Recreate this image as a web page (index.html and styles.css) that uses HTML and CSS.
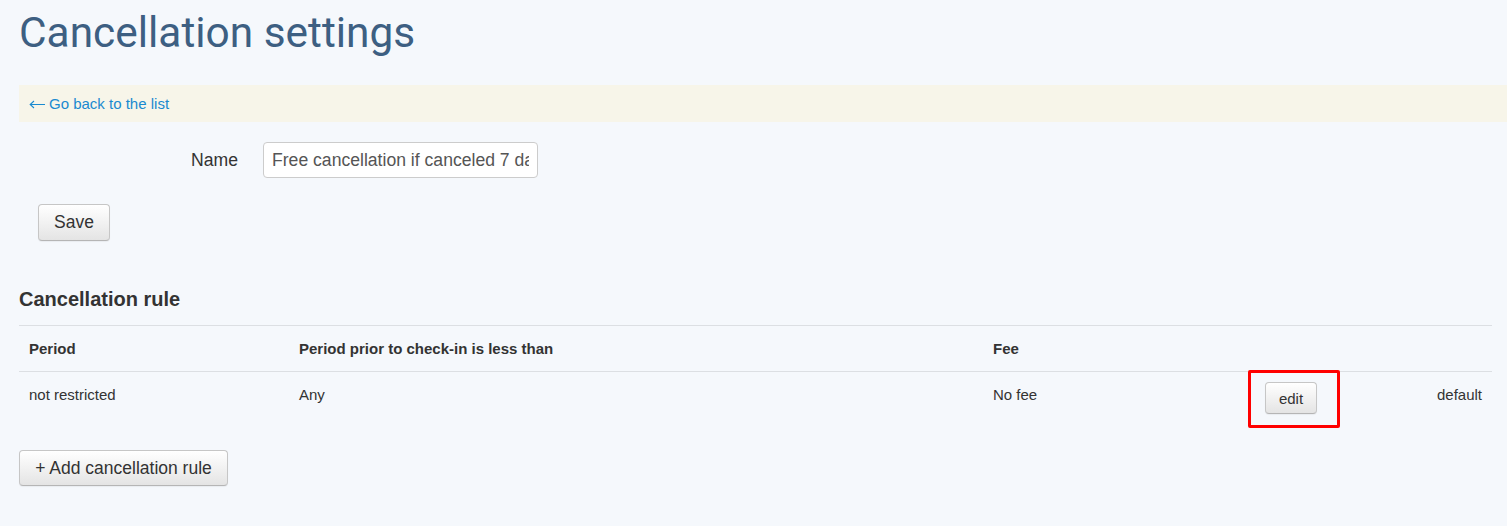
FILE: index.html
```html
<!DOCTYPE html>
<html lang="en">
<head>
<meta charset="utf-8">
<title>Cancellation settings</title>
<link rel="stylesheet" href="styles.css">
</head>
<body>
<main class="page">
  <h1 class="page-title">Cancellation settings</h1>
  <div class="back-bar"><a class="back-link" href="#"><svg class="back-arrow" width="16" height="9" viewBox="0 0 16 9" aria-hidden="true"><path d="M16 4.5H1.5M5 1L1.2 4.5L5 8" fill="none" stroke="currentColor" stroke-width="1.1"/></svg>Go back to the list</a></div>

  <form class="settings-form">
    <div class="form-row">
      <label class="form-label" for="name">Name</label>
      <input class="form-input" id="name" type="text" value="Free cancellation if canceled 7 days before check-in">
    </div>
    <div class="form-actions">
      <button class="btn btn-save" type="button">Save</button>
    </div>
  </form>

  <h2 class="section-title">Cancellation rule</h2>
  <table class="rules">
    <colgroup>
      <col class="c1"><col class="c2"><col class="c3"><col class="c4"><col class="c5">
    </colgroup>
    <thead>
      <tr><th>Period</th><th>Period prior to check-in is less than</th><th>Fee</th><th></th><th></th></tr>
    </thead>
    <tbody>
      <tr>
        <td>not restricted</td>
        <td>Any</td>
        <td>No fee</td>
        <td class="cell-action"><span class="highlight"><button class="btn btn-sm" type="button">edit</button></span></td>
        <td class="cell-default">default</td>
      </tr>
    </tbody>
  </table>

  <button class="btn btn-add" type="button">+ Add cancellation rule</button>
</main>
</body>
</html>
```

FILE: styles.css
```css
html, body {
  margin: 0;
  padding: 0;
  background: #f5f8fc;
}
body {
  font-family: "Liberation Sans", Arial, sans-serif;
  color: #333;
}
.page {
  padding: 0 0 40px 19px;
}
.page-title {
  font-family: Roboto, "Liberation Sans", sans-serif;
  font-weight: 400;
  font-size: 42.4px;
  line-height: 46px;
  color: #3d5f82;
  margin: 0;
  padding-top: 10px;
}
.back-bar {
  margin-top: 29px;
  background: #f7f5e9;
  height: 37px;
  display: flex;
  align-items: center;
  padding-left: 10px;
}
.back-link {
  color: #1a8ad0;
  text-decoration: none;
  font-size: 15px;
  display: inline-flex;
  align-items: center;
}
.back-arrow {
  margin-right: 4px;
  margin-top: 1px;
}
.settings-form {
  margin-top: 20px;
}
.form-row {
  display: flex;
  align-items: center;
  gap: 25px;
}
.form-label {
  width: 219px;
  text-align: right;
  font-size: 17.6px;
  color: #333;
}
.form-input {
  box-sizing: border-box;
  width: 275px;
  height: 36px;
  border: 1px solid #ccc;
  border-radius: 4px;
  background: #fff;
  padding: 0 8px;
  font-family: "Liberation Sans", Arial, sans-serif;
  font-size: 17.6px;
  color: #555;
}
.form-actions {
  margin-top: 26px;
  padding-left: 19px;
}
.btn {
  font-family: "Liberation Sans", Arial, sans-serif;
  color: #333;
  background: linear-gradient(#ffffff, #e4e4e4);
  border: 1px solid #c6c6c6;
  border-bottom-color: #b5b5b5;
  border-radius: 4px;
  box-shadow: 0 1px 1px rgba(0,0,0,0.05);
  cursor: pointer;
  box-sizing: border-box;
}
.btn-save {
  width: 72px;
  height: 37px;
  font-size: 17.5px;
}
.section-title {
  font-size: 20px;
  font-weight: 700;
  margin: 46px 0 0;
  line-height: 24px;
}
.rules {
  margin-top: 14px;
  width: calc(100% - 15px);
  border-collapse: collapse;
  table-layout: fixed;
  font-size: 15px;
}
.rules .c1 { width: 270px; }
.rules .c2 { width: 694px; }
.rules .c3 { width: 272px; }
.rules .c4 { width: 140px; }
.rules th, .rules td {
  text-align: left;
  padding: 12px 10px;
  line-height: 21px;
  vertical-align: top;
}
.rules thead tr { border-top: 1px solid #dcdfe3; border-bottom: 1px solid #dcdfe3; }
.rules th { font-weight: 700; }
.rules td.cell-action { padding-top: 10px; padding-bottom: 10px; }
.rules td.cell-default { text-align: right; }
.highlight {
  position: relative;
  display: inline-block;
}
.highlight::after {
  content: "";
  position: absolute;
  left: -17px;
  top: -12px;
  right: -23px;
  bottom: -14px;
  border: 3px solid #ff0000;
  border-radius: 2px;
}
.btn-sm {
  width: 52px;
  height: 32px;
  font-size: 15px;
  display: block;
}
.btn-add {
  margin-top: 26px;
  width: 209px;
  height: 36px;
  font-size: 17.5px;
}
```
